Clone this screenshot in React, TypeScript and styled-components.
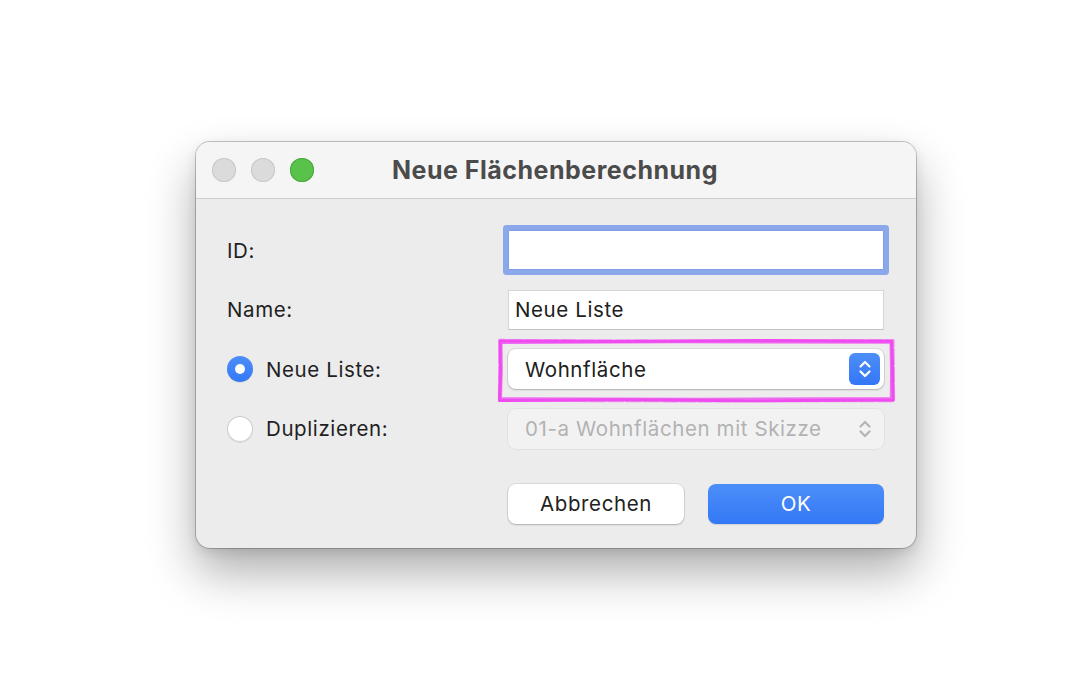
import React from "react";
import styled, { createGlobalStyle } from "styled-components";

const Global = createGlobalStyle`
  html, body { margin: 0; padding: 0; background: #ffffff; }
  body { font-family: Inter, "Liberation Sans", sans-serif; -webkit-font-smoothing: antialiased; }
`;

const Page = styled.div`
  width: 1084px;
  height: 686px;
  padding: 142px 0 0 196px;
  box-sizing: border-box;
`;

const Window = styled.div`
  width: 720px;
  border-radius: 14px;
  background: #ececec;
  box-shadow: 0 0 0 1px rgba(0, 0, 0, 0.22), 0 24px 48px rgba(0, 0, 0, 0.32), 0 4px 12px rgba(0, 0, 0, 0.1);
`;

const TitleBar = styled.div`
  height: 56px;
  display: flex;
  align-items: center;
  background: #f6f5f5;
  border-radius: 14px 14px 0 0;
  border-bottom: 1px solid #cfcfcf;
  padding-left: 16px;
`;

const Lights = styled.div`
  display: flex;
  gap: 15px;
`;

const Light = styled.span<{ $color: string; $border: string }>`
  width: 24px;
  height: 24px;
  border-radius: 50%;
  background: ${(p) => p.$color};
  box-shadow: inset 0 0 0 1px ${(p) => p.$border};
`;

const Title = styled.div`
  flex: 1;
  text-align: center;
  margin-left: -120px;
  font-size: 25px;
  font-weight: 700;
  color: #4b4b4b;
  letter-spacing: 0.5px;
`;

const Body = styled.div`
  padding: 31px 32px 24px 31px;
  display: flex;
  flex-direction: column;
  font-size: 20.5px;
  letter-spacing: 0.6px;
`;

const Form = styled.div`
  display: grid;
  grid-template-columns: 1fr 376px;
  row-gap: 19.5px;
  align-items: center;
`;

const Label = styled.div`
  display: flex;
  align-items: center;
  gap: 13px;
  color: #1f1f1f;
`;

const Radio = styled.span<{ $on?: boolean }>`
  width: 26px;
  height: 26px;
  border-radius: 50%;
  box-sizing: border-box;
  display: flex;
  align-items: center;
  justify-content: center;
  background: ${(p) => (p.$on ? "linear-gradient(#4d8ef8, #3478f6)" : "#ffffff")};
  box-shadow: ${(p) => (p.$on ? "0 1px 1px rgba(0,0,0,0.08)" : "inset 0 0 0 1px #c9c9c9, 0 1px 1px rgba(0,0,0,0.06)")};
  &::after {
    content: "";
    display: ${(p) => (p.$on ? "block" : "none")};
    width: 10px;
    height: 10px;
    border-radius: 50%;
    background: #fff;
  }
`;

const Field = styled.div<{ $focus?: boolean }>`
  height: 40px;
  box-sizing: border-box;
  background: #fff;
  border: 1px solid #d6d6d6;
  border-bottom-color: #c4c4c4;
  padding: 0 6px;
  display: flex;
  align-items: center;
  color: #202020;
  ${(p) => (p.$focus ? "box-shadow: 0 0 0 5px #8aa8ea; border-radius: 1px; border-color: #7f9ee6;" : "")}
`;

const PopupWrap = styled.div`
  position: relative;
`;

const Popup = styled.div<{ $disabled?: boolean }>`
  height: 40px;
  box-sizing: border-box;
  border-radius: 8px;
  background: ${(p) => (p.$disabled ? "#f2f2f2" : "#ffffff")};
  box-shadow: ${(p) =>
    p.$disabled
      ? "0 0 0 1px #e2e2e2"
      : "0 0 0 1px rgba(0,0,0,0.08), 0 1px 2px rgba(0,0,0,0.2)"};
  display: flex;
  align-items: center;
  justify-content: space-between;
  padding: 0 4px 0 17px;
  color: ${(p) => (p.$disabled ? "#b2b2b2" : "#202020")};
`;

const Stepper = styled.span<{ $disabled?: boolean }>`
  width: 31px;
  height: 32px;
  border-radius: 6px;
  display: flex;
  align-items: center;
  justify-content: center;
  background: ${(p) => (p.$disabled ? "transparent" : "linear-gradient(#4d8ff8, #3476f5)")};
  color: ${(p) => (p.$disabled ? "#b4b4b4" : "#ffffff")};
`;

const Annotation = styled.svg`
  position: absolute;
  left: -11px;
  top: -11px;
  width: 398px;
  height: 65px;
  pointer-events: none;
  overflow: visible;
`;

const Buttons = styled.div`
  display: flex;
  justify-content: flex-end;
  gap: 24px;
  margin-top: 35px;
`;

const Button = styled.button<{ $primary?: boolean }>`
  width: 176px;
  height: 40px;
  border: none;
  border-radius: 8px;
  font-family: inherit;
  font-size: inherit;
  letter-spacing: inherit;
  color: ${(p) => (p.$primary ? "#ffffff" : "#222")};
  background: ${(p) => (p.$primary ? "linear-gradient(#4c8ef8, #3478f6)" : "#ffffff")};
  box-shadow: ${(p) =>
    p.$primary
      ? "0 1px 1px rgba(0,0,0,0.12)"
      : "0 0 0 1px rgba(0,0,0,0.07), 0 1px 2px rgba(0,0,0,0.2)"};
`;

const Chevrons = () => (
  <svg width="14" height="22" viewBox="0 0 14 22" fill="none" stroke="currentColor" strokeWidth="2.2" strokeLinecap="round" strokeLinejoin="round">
    <path d="M2.5 8.5 L7 4 L11.5 8.5" />
    <path d="M2.5 13.5 L7 18 L11.5 13.5" />
  </svg>
);

const RoughRect = () => (
  <Annotation viewBox="0 0 398 65">
    <g fill="none" stroke="#ef4cf0" strokeLinecap="round" strokeLinejoin="round">
      <path d="M3 3 L120 3.6 L260 2.6 L395 3.2 L395.6 30 L396 62 L250 62.8 L120 61.8 L2.5 62.5 L3.4 30 Z" strokeWidth="3" />
      <path d="M4.5 5 L180 4.2 L393.5 4.8 L394 33 L393.8 60 L200 60.8 L4 60.3 L4.8 32 Z" strokeWidth="2" opacity="0.8" />
      <path d="M2 1.5 L200 2.2 L397 1.6 L397.5 63.5 L190 63.8 L1.5 63.2 Z" strokeWidth="1.3" opacity="0.55" strokeDasharray="6 2 9 1" />
    </g>
  </Annotation>
);

export default function App() {
  return (
    <>
      <Global />
      <Page>
        <Window>
          <TitleBar>
            <Lights>
              <Light $color="#dcdbdb" $border="#c9c8c8" />
              <Light $color="#dcdbdb" $border="#c9c8c8" />
              <Light $color="#58c24a" $border="#4aa83e" />
            </Lights>
            <Title>Neue Flächenberechnung</Title>
          </TitleBar>
          <Body>
            <Form>
              <Label>ID:</Label>
              <Field $focus />
              <Label>Name:</Label>
              <Field>Neue Liste</Field>
              <Label>
                <Radio $on />
                Neue Liste:
              </Label>
              <PopupWrap>
                <Popup>
                  Wohnfläche
                  <Stepper>
                    <Chevrons />
                  </Stepper>
                </Popup>
                <RoughRect />
              </PopupWrap>
              <Label>
                <Radio />
                Duplizieren:
              </Label>
              <Popup $disabled>
                01-a Wohnflächen mit Skizze
                <Stepper $disabled>
                  <Chevrons />
                </Stepper>
              </Popup>
            </Form>
            <Buttons>
              <Button>Abbrechen</Button>
              <Button $primary>OK</Button>
            </Buttons>
          </Body>
        </Window>
      </Page>
    </>
  );
}
